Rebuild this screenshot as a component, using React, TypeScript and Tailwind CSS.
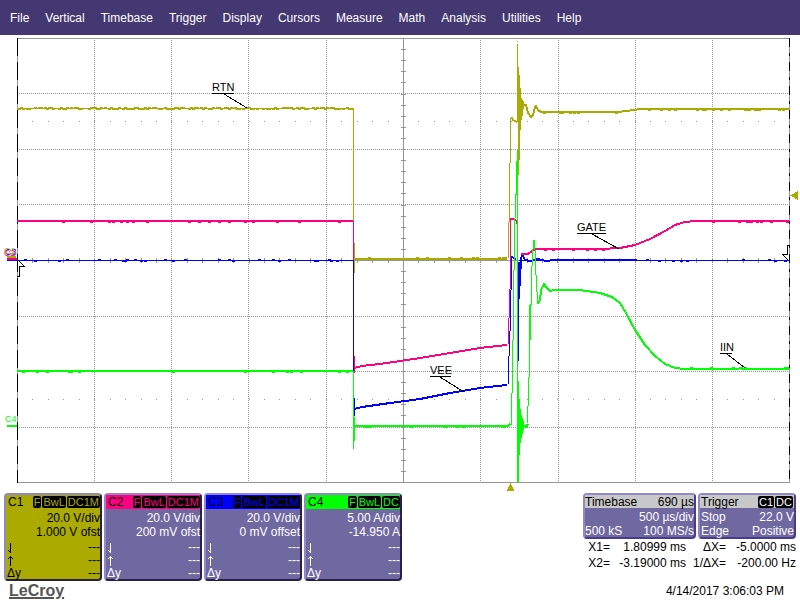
import clsx from "clsx";

const MENU = [
  "File",
  "Vertical",
  "Timebase",
  "Trigger",
  "Display",
  "Cursors",
  "Measure",
  "Math",
  "Analysis",
  "Utilities",
  "Help",
];

const CHANNELS = [
  {
    name: "C1",
    card: "bg-[#aaaa00] text-black",
    head: "bg-[#aaaa00]",
    tag: "text-[#aaaa00]",
    tags: ["F", "BwL", "DC1M"],
    scale: "20.0 V/div",
    offset: "1.000 V ofst",
  },
  {
    name: "C2",
    card: "bg-[#7068a0] text-white",
    head: "bg-[#ff0080]",
    tag: "text-[#ff0080]",
    tags: ["F", "BwL", "DC1M"],
    scale: "20.0 V/div",
    offset: "200 mV ofst",
  },
  {
    name: "C3",
    card: "bg-[#7068a0] text-white",
    head: "bg-[#0000ff]",
    tag: "text-[#0000ff]",
    tags: ["F", "BwL", "DC1M"],
    scale: "20.0 V/div",
    offset: "0 mV offset",
  },
  {
    name: "C4",
    card: "bg-[#7068a0] text-white",
    head: "bg-[#00ff00]",
    tag: "text-[#00ff00]",
    tags: ["F", "BwL", "DC"],
    scale: "5.00 A/div",
    offset: "-14.950 A",
  },
];

const COLS = [94, 171, 248, 326, 480, 558, 635, 712];
const ROWS = [93, 149, 204, 316, 371, 427];

const OLIVE = "#aaaa00";
const PINK = "#ff0080";
const BLUE = "#0000ff";
const GREEN = "#00ff00";

// one pixel steps above and below a flat trace
const noise = (x1: number, x2: number, y: number, seed: number, amount: number) => {
  let d = "";
  let s = seed;
  for (let x = x1; x < x2; x += 2) {
    s = (s * 1103515245 + 12345) % 2147483648;
    const r = s / 2147483648;
    if (r < amount) d += `M${x} ${r < amount / 2 ? y - 1 : y + 1}h3`;
  }
  return d;
};

// vertical strokes, given as [x, top, bottom]
const bars = (list: number[][]) => list.map(([x, a, b]) => `M${x + 0.5} ${a}V${b}`).join("");

const Trace = ({ color, thin, thick }: { color: string; thin: string; thick: string }) => (
  <g stroke={color} fill="none">
    <path d={thin} />
    <path d={thick} strokeWidth="2" />
  </g>
);

const Callout = ({ text, x, y, width, line }: { text: string; x: number; y: number; width: number; line: string }) => (
  <g>
    <text x={x} y={y - 2} className="text-[11px]">
      {text}
    </text>
    <path d={`M${x} ${y + 0.5}h${width}M${line}`} stroke="black" fill="none" />
  </g>
);

const Grid = () => {
  const ticks: string[] = [];
  for (let i = 1; i < 50; i++) {
    ticks.push(`M${Math.round(17 + i * 15.44) + 0.5} 258v5`);
  }
  for (let i = 1; i < 40; i++) {
    ticks.push(`M401 ${Math.round(38 + i * 11.1) + 0.5}h5`);
  }
  const dots: string[] = [];
  for (let i = 1; i < 50; i++) {
    const x = Math.round(17 + i * 15.44);
    dots.push(`M${x} 121.5h1M${x} 399.5h1`);
  }
  return (
    <g stroke="#969696" fill="none">
      <path d="M17 38.5H790M17 482.5H790M17 260.5H790M403.5 38V483M17.5 38V483M789.5 38V483" />
      <path d={COLS.map((x) => `M${x + 0.5} 40V482`).join("")} strokeDasharray="1 1" />
      <path d={ROWS.map((y) => `M19 ${y + 0.5}H789`).join("")} strokeDasharray="1 1" />
      <path d={ticks.join("")} />
      <path d={dots.join("")} />
    </g>
  );
};

const Scope = () => (
  <svg
    viewBox="0 35 800 457"
    className="block w-full"
    shapeRendering="crispEdges"
    role="img"
    aria-label="Waveforms"
  >
    <Grid />
    <path d="M17.5 38V483" stroke="black" strokeDasharray="18 6" />
    <path d="M789.5 38V483" stroke="black" strokeDasharray="9 6 3 6" />

    <Trace
      color={OLIVE}
      thin={
        "M17 108.5H353.5V258M354.5 243V273M508.5 258V222M509.5 222V163M510.5 163V118M517.5 38v1M517.5 41v1" +
        noise(18, 352, 108.5, 7, 0.75) +
        noise(356, 506, 258.5, 21, 0.4) +
        noise(541, 618, 112.5, 5, 0.3) +
        noise(640, 788, 109.5, 13, 0.3) +
        bars([
          [517, 44, 122],
          [518, 67, 175],
          [519, 75, 160],
          [520, 88, 130],
          [521, 98, 120],
          [522, 100, 116],
          [523, 101, 109],
        ])
      }
      thick="M354 259H507M511 118h1l1 2 2 1 2 1M523 105h3l2 8 3 4 2-2 2-8 1-1 2 4 3 2H618L630 110.5 640 109H789"
    />
    <Trace
      color={PINK}
      thin={
        "M353.5 221V368M354.5 356V373M508.5 344V318M509.5 318V289M510.5 289V218M516.5 220V224" +
        noise(18, 352, 221.5, 3, 0.15) +
        noise(540, 610, 249.5, 31, 0.3) +
        noise(692, 788, 221.5, 43, 0.25)
      }
      thick="M17 221H353M354 368L362 366 380 364 400 361 420 358 450 353 480 348 507 345M511 219H514L516 221M521 254H528L532 251 536 249 545 249H600L620 248 635 245 650 239 665 231 675 225 685 222 695 221H789"
    />
    <Trace
      color={BLUE}
      thin={
        "M17 260.5H353.5V409M354.5 398V416M508.5 384V356M509.5 356V331M510.5 331V290M511.5 290V257M519 260.5H789" +
        noise(18, 352, 260.5, 17, 0.14) +
        noise(636, 788, 260.5, 19, 0.16) +
        bars([
          [517, 262, 300],
          [518, 262, 361],
          [519, 262, 299],
          [520, 257, 286],
          [521, 255, 269],
        ])
      }
      thick="M354 409L362 407 390 403 420 399 450 393 480 388 507 385M511 256.5L516 259M521 256H523L525 260 530 261 538 259 546 261 555 260H637"
    />
    <Trace
      color={GREEN}
      thin={
        "M353.5 371V449M354.5 417V441M511.5 425V393M512.5 393V340M513.5 340V270M514.5 270V218M515.5 218V194M516.5 195V161M517.5 150V482" +
        "M527.5 423V406M528.5 406V377M529.5 377V305M530.5 340V304M531.5 305V266M532.5 266V249M533.5 249V240M534.5 240V250M535.5 250V275M536.5 275V292M537.5 292V304" +
        noise(18, 352, 371.5, 9, 0.2) +
        noise(356, 508, 426.5, 29, 0.2) +
        noise(690, 788, 368.5, 37, 0.3) +
        bars([
          [518, 381, 482],
          [519, 399, 455],
          [520, 409, 443],
          [521, 415, 438],
          [522, 418, 434],
          [523, 421, 430],
        ])
      }
      thick="M17 371H353M354 426H508L510 424M523 425L526 427 528 424M538 304L540 300 541 290 544 284 546 287 550 291 554 290H580L600 293 612 297 620 303 626 313 635 330 645 345 655 356 665 364 675 368 685 369H715L740 368.5 789 369"
    />

    <g className="font-['Liberation_Sans',sans-serif]">
      <Callout text="RTN" x={212} y={93} width={22} line="224 94L247 108" />
      <Callout text="GATE" x={577} y={233} width={29} line="592 234L619 249" />
      <Callout text="VEE" x={430} y={376} width={21} line="440 377L464 392" />
      <Callout text="IIN" x={720} y={353} width={12} line="727 354L745 368" />
      <g className="text-[9px]">
        <text x="5" y="255" fill={BLUE}>C3</text>
        <text x="4" y="256" fill={PINK}>C2</text>
        <text x="4" y="254" fill={OLIVE}>C1</text>
        <text x="5" y="422" fill={GREEN}>C4</text>
      </g>
    </g>
    <path d="M7 257h9" stroke={OLIVE} strokeWidth="2" />
    <path d="M7 259h10" stroke={PINK} strokeWidth="2" />
    <path d="M7 260.5h10" stroke={BLUE} />
    <path d="M7 426h10" stroke={GREEN} strokeWidth="2" />

    {/* cursor handles and trigger markers */}
    <path d="M18.5 260.5L24.5 266.5H19.5V276.5H17" fill="none" stroke="black" />
    <path d="M788.5 260.5L782.5 254.5H787.5V245.5H790" fill="none" stroke="black" />
    <path d="M790 195.5L798 191V200Z" fill={OLIVE} />
    <path d="M510.5 483L506.5 491H514.5Z" fill={OLIVE} />
  </svg>
);

const Tags = ({ items, className }: { items: string[]; className: string }) => (
  <span className="flex gap-px">
    {items.map((t) => (
      <span key={t} className={clsx("rounded-xs bg-black px-px text-[11px] leading-3", className)}>
        {t}
      </span>
    ))}
  </span>
);

const Arrow = ({ label, d }: { label: string; d: string }) => (
  <svg
    viewBox="0 0 5 10"
    className="h-[10px] w-[5px]"
    fill="none"
    stroke="currentColor"
    shapeRendering="crispEdges"
    role="img"
    aria-label={label}
  >
    <path d={d} />
  </svg>
);

const CARD = "rounded-sm border-2 border-t-[#9088c8] border-l-[#9088c8] border-r-[#282048] border-b-[#282048]";

const ChannelCard = ({ channel }: { channel: (typeof CHANNELS)[number] }) => (
  <section className={clsx(CARD, "h-[88px] w-[98px]", channel.card)}>
    <h2 className={clsx("flex h-[14px] items-center justify-between pl-0.5 text-xs text-black", channel.head)}>
      {channel.name}
      <Tags items={channel.tags} className={channel.tag} />
    </h2>
    <div className="mt-0.5 text-right leading-[14px]">
      <p>{channel.scale}</p>
      <p>{channel.offset}</p>
    </div>
    <dl className="mt-0.5 leading-[13px]">
      <div className="flex items-center justify-between pl-0.5">
        <dt>
          <Arrow label="Lower" d="M2.5 0V10M0 7.5H1M1 8.5H2" />
        </dt>
        <dd>---</dd>
      </div>
      <div className="flex items-center justify-between pl-0.5">
        <dt>
          <Arrow label="Upper" d="M2.5 0V10M0 2.5H1M1 1.5H2M3 1.5H4M4 2.5H5" />
        </dt>
        <dd>---</dd>
      </div>
      <div className="flex items-center justify-between pl-px">
        <dt>Δy</dt>
        <dd>---</dd>
      </div>
    </dl>
  </section>
);

const PANEL = "rounded-sm border-2 border-[#483c90] border-t-[#9088c8] border-l-[#9088c8] bg-[#7068a0] text-white";

const App = () => {
  return (
    <div className="flex min-h-screen flex-col bg-white font-['Liberation_Sans',Arial,sans-serif] text-xs text-black">
      <nav className="flex h-[35px] items-center gap-4 bg-[#443872] px-2.5 text-white">
        {MENU.map((item) => (
          <button key={item} type="button">
            {item}
          </button>
        ))}
      </nav>

      <Scope />

      <footer className="flex justify-between pr-1 pl-1">
        <div>
          <div className="flex gap-0.5 pt-px">
            {CHANNELS.map((c) => (
              <ChannelCard key={c.name} channel={c} />
            ))}
          </div>
          <p className="ml-[5px] text-base leading-5 font-bold text-[#555555] underline decoration-2">LeCroy</p>
        </div>

        <div className="flex w-[213px] flex-col pt-px">
          <div className="flex gap-0.5">
            <section className={clsx(PANEL, "h-[46px] w-[113px]")}>
              <h2 className="flex h-[13px] items-center justify-between bg-[#c8c8c8] text-black">
                Timebase <span>690 µs</span>
              </h2>
              <div className="mt-0.5 leading-[14px]">
                <p className="text-right">500 µs/div</p>
                <p className="flex justify-between">
                  500 kS <span>100 MS/s</span>
                </p>
              </div>
            </section>
            <section className={clsx(PANEL, "h-[46px] w-[98px]")}>
              <h2 className="flex h-[13px] items-center justify-between bg-[#c8c8c8] px-px text-black">
                Trigger
                <Tags items={["C1", "DC"]} className="text-white" />
              </h2>
              <div className="mt-0.5 pl-px leading-[14px]">
                <p className="flex justify-between">
                  Stop <span>22.0 V</span>
                </p>
                <p className="flex justify-between">
                  Edge <span>Positive</span>
                </p>
              </div>
            </section>
          </div>

          <dl className="grid grid-cols-[27px_76px_40px_70px] text-right leading-4 whitespace-nowrap">
            <dt>X1=</dt>
            <dd>1.80999 ms</dd>
            <dt>ΔX=</dt>
            <dd>-5.0000 ms</dd>
            <dt>X2=</dt>
            <dd>-3.19000 ms</dd>
            <dt>1/ΔX=</dt>
            <dd>-200.00 Hz</dd>
          </dl>

          <time className="mt-3 mr-3 text-right">4/14/2017 3:06:03 PM</time>
        </div>
      </footer>
    </div>
  );
};

export default App;
